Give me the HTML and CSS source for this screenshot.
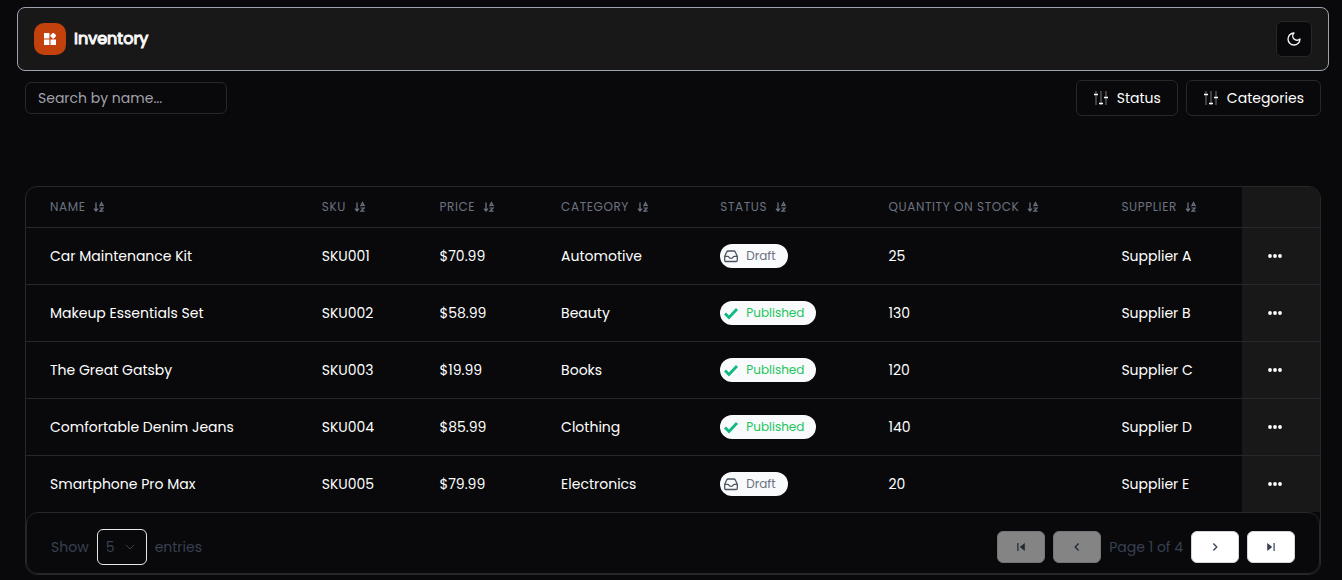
FILE: index.html
```
<!DOCTYPE html>
<html lang="en">
<head>
<meta charset="utf-8">
<meta name="viewport" content="width=device-width, initial-scale=1">
<title>Inventory</title>
<link rel="stylesheet" href="styles.css">
</head>
<body>
<svg class="sprite" aria-hidden="true">
  <symbol id="sort" viewBox="0 0 12 12"><path d="M3 1.500v8.500M1 7.600 3 9.900l2-2.300" fill="none" stroke="currentColor" stroke-width="1.300"/><path d="M6.500 5.300 8.500 1.500l2 3.800M7.200 4.400h2.600M6.500 7h3.600L7 10.200h3.600" fill="none" stroke="currentColor" stroke-width="1.200"/></symbol>
  <symbol id="sliders" viewBox="0 0 16 16"><path d="M3 1v14M8 1v14M13 1v14" stroke="currentColor" stroke-width="1" opacity=".45"/><path d="M1 4.500h4M6 13.500h4M11 7.500h4" stroke="currentColor" stroke-width="1.500"/></symbol>
  <symbol id="inbox" viewBox="0 0 16 16"><path d="M1.700 8.300 3.700 4Q4.200 3 5.200 3h5.600q1 0 1.500 1l2 4.300v3.900q0 1.300-1.300 1.300H3q-1.300 0-1.300-1.300zM1.700 8.300h3q.8 0 1.100.8.500 1.300 2.200 1.300t2.200-1.300q.3-.8 1.100-.8h3" fill="none" stroke="currentColor" stroke-width="1.300" stroke-linejoin="round"/></symbol>
  <symbol id="check" viewBox="0 0 16 16"><path d="m2 8.500 4 4L14 4" fill="none" stroke="currentColor" stroke-width="2.800"/></symbol>
  <symbol id="dots" viewBox="0 0 16 16"><g fill="currentColor"><circle cx="3" cy="8" r="1.900"/><circle cx="8" cy="8" r="1.900"/><circle cx="13" cy="8" r="1.900"/></g></symbol>
</svg>

<header class="topbar">
  <div class="brand">
    <span class="logo"><svg viewBox="0 0 12 12" width="12" height="12" fill="#fff" aria-hidden="true"><path d="M0 0h5.400v5.400H0zM0 6.500h5.400V12H0zM6.500 6.500H12V12H6.500z"/><path d="M9.200-.3 12.200 2.700l-3 3-3-3z" stroke="#fff" stroke-width=".6" stroke-linejoin="round"/></svg></span>
    <h1 class="title">Inventory</h1>
  </div>
  <button class="theme" type="button" aria-label="Toggle theme"><svg viewBox="0 0 24 24" width="16" height="16" fill="none" stroke="currentColor" stroke-width="2" stroke-linecap="round" stroke-linejoin="round"><path d="M12 3a6 6 0 0 0 9 9 9 9 0 1 1-9-9Z"/></svg></button>
</header>

<main class="content">
  <div class="toolbar">
    <input class="search" type="text" placeholder="Search by name..." aria-label="Search by name">
    <div class="filters">
      <button class="filter" type="button"><svg class="icon"><use href="#sliders"/></svg>Status</button>
      <button class="filter" type="button"><svg class="icon"><use href="#sliders"/></svg>Categories</button>
    </div>
  </div>

  <section class="panel">
    <table class="table">
      <colgroup><col class="c-name"><col class="c-sku"><col class="c-price"><col class="c-category"><col class="c-status"><col class="c-quantity"><col class="c-supplier"><col class="c-actions"></colgroup>
      <thead>
        <tr>
          <th><button class="sort" type="button">Name<svg class="sort-icon"><use href="#sort"/></svg></button></th>
          <th><button class="sort" type="button">SKU<svg class="sort-icon"><use href="#sort"/></svg></button></th>
          <th><button class="sort" type="button">Price<svg class="sort-icon"><use href="#sort"/></svg></button></th>
          <th><button class="sort" type="button">Category<svg class="sort-icon"><use href="#sort"/></svg></button></th>
          <th><button class="sort" type="button">Status<svg class="sort-icon"><use href="#sort"/></svg></button></th>
          <th><button class="sort" type="button">Quantity on stock<svg class="sort-icon"><use href="#sort"/></svg></button></th>
          <th><button class="sort" type="button">Supplier<svg class="sort-icon"><use href="#sort"/></svg></button></th>
          <th class="actions" aria-label="Actions"></th>
        </tr>
      </thead>
      <tbody>
        <tr><td>Car Maintenance Kit</td><td>SKU001</td><td>$70.99</td><td>Automotive</td><td><span class="badge draft"><svg class="badge-icon"><use href="#inbox"/></svg>Draft</span></td><td>25</td><td>Supplier A</td><td class="actions"><button class="more" type="button" aria-label="Row actions"><svg class="icon"><use href="#dots"/></svg></button></td></tr>
        <tr><td>Makeup Essentials Set</td><td>SKU002</td><td>$58.99</td><td>Beauty</td><td><span class="badge published"><svg class="badge-icon"><use href="#check"/></svg>Published</span></td><td>130</td><td>Supplier B</td><td class="actions"><button class="more" type="button" aria-label="Row actions"><svg class="icon"><use href="#dots"/></svg></button></td></tr>
        <tr><td>The Great Gatsby</td><td>SKU003</td><td>$19.99</td><td>Books</td><td><span class="badge published"><svg class="badge-icon"><use href="#check"/></svg>Published</span></td><td>120</td><td>Supplier C</td><td class="actions"><button class="more" type="button" aria-label="Row actions"><svg class="icon"><use href="#dots"/></svg></button></td></tr>
        <tr><td>Comfortable Denim Jeans</td><td>SKU004</td><td>$85.99</td><td>Clothing</td><td><span class="badge published"><svg class="badge-icon"><use href="#check"/></svg>Published</span></td><td>140</td><td>Supplier D</td><td class="actions"><button class="more" type="button" aria-label="Row actions"><svg class="icon"><use href="#dots"/></svg></button></td></tr>
        <tr><td>Smartphone Pro Max</td><td>SKU005</td><td>$79.99</td><td>Electronics</td><td><span class="badge draft"><svg class="badge-icon"><use href="#inbox"/></svg>Draft</span></td><td>20</td><td>Supplier E</td><td class="actions"><button class="more" type="button" aria-label="Row actions"><svg class="icon"><use href="#dots"/></svg></button></td></tr>
      </tbody>
    </table>

    <footer class="pager">
      <div class="group">
        <label for="size">Show</label>
        <span class="select-wrap">
          <select class="size" id="size"><option>5</option><option>10</option><option>20</option></select>
          <svg class="chevron" viewBox="0 0 10 6" width="10" height="6" fill="none" stroke="currentColor" aria-hidden="true"><path d="m.8.800 4.200 4.200L9.200.800"/></svg>
        </span>
        <span>entries</span>
      </div>
      <nav class="group" aria-label="Pagination">
        <button class="page" type="button" disabled aria-label="First page"><svg viewBox="0 0 10 10" width="10" height="10" fill="currentColor"><path d="M1.300 1h1.200v8H1.300zM8.800 1v8l-5-4z"/></svg></button>
        <button class="page" type="button" disabled aria-label="Previous page"><svg viewBox="0 0 10 10" width="10" height="10" fill="none" stroke="currentColor" stroke-width="1.300"><path d="M6.600 1.500 3.200 5l3.400 3.500"/></svg></button>
        <span>Page 1 of 4</span>
        <button class="page" type="button" aria-label="Next page"><svg viewBox="0 0 10 10" width="10" height="10" fill="none" stroke="currentColor" stroke-width="1.300"><path d="M3.400 1.500 6.800 5 3.400 8.500"/></svg></button>
        <button class="page" type="button" aria-label="Last page"><svg viewBox="0 0 10 10" width="10" height="10" fill="currentColor"><path d="M7.500 1h1.200v8H7.500zM1.200 1v8l5-4z"/></svg></button>
      </nav>
    </footer>
  </section>
</main>
</body>
</html>
```
FILE: styles.css
```
* { box-sizing: border-box; }
body {
  margin: 0;
  padding: 7px 13px 0 17px;
  background: #09090b;
  color: #fafafa;
  font-family: Poppins, Inter, "Liberation Sans", sans-serif;
  font-size: 14px;
  line-height: 20px;
}
button, input, select { font: inherit; color: inherit; }
button { cursor: pointer; }
svg { flex: none; display: block; }
.sprite { display: none; }
.icon { width: 16px; height: 16px; }

.topbar {
  display: flex;
  align-items: center;
  justify-content: space-between;
  height: 64px;
  padding: 0 16px;
  border: 1px solid #9ca3af;
  border-radius: 8px;
  background: #181818;
}
.brand { display: flex; align-items: center; gap: 8px; }
.logo {
  display: grid;
  place-items: center;
  width: 32px;
  height: 32px;
  border-radius: 10px;
  background: #c2410c;
}
.title {
  margin: 0;
  font-size: 16px;
  line-height: 24px;
  font-weight: 400;
  -webkit-text-stroke: 1px currentColor;
}
.theme {
  display: grid;
  place-items: center;
  width: 36px;
  height: 36px;
  padding: 0;
  border: 1px solid #27272a;
  border-radius: 6px;
  background: #09090b;
}

.content { padding: 9px 8px 0; }
.toolbar { display: flex; align-items: center; justify-content: space-between; }
.search {
  width: 202px;
  height: 32px;
  padding: 0 12px;
  border: 1px solid #27272a;
  border-radius: 6px;
  background: transparent;
}
.search::placeholder { color: #a1a1aa; opacity: 1; }
.filters { display: flex; gap: 8px; }
.filter {
  display: flex;
  align-items: center;
  gap: 8px;
  height: 36px;
  padding: 0 16px;
  border: 1px solid #27272a;
  border-radius: 6px;
  background: transparent;
  color: #fff;
}

.panel {
  margin-top: 70px;
  border: 1px solid #27272a;
  border-radius: 12px;
  overflow: hidden;
}
.table { width: 100%; border-collapse: separate; border-spacing: 0; table-layout: fixed; color: #fff; }
.c-name { width: 21%; }
.c-sku { width: 9.1%; }
.c-price { width: 9.4%; }
.c-category { width: 12.3%; }
.c-status { width: 13%; }
.c-quantity { width: 18%; }
.c-supplier { width: 11.2%; }
.c-actions { width: 6%; }
th, td { padding: 0 0 0 24px; text-align: left; white-space: nowrap; border-bottom: 1px solid #27272a; }
th { height: 41px; font-weight: 400; }
td { height: 57px; }
tbody tr:last-child td { height: 56px; border-bottom: 0; }
.sort {
  display: flex;
  align-items: center;
  gap: 8px;
  padding: 0;
  border: 0;
  background: none;
  color: #6b7280;
  font-size: 12px;
  line-height: 16px;
  letter-spacing: 0.05em;
  text-transform: uppercase;
}
.sort-icon { width: 12px; height: 12px; }
.actions { background: #181818; }
.more { display: block; padding: 0; border: 0; background: none; }
td.actions { padding-left: 25px; }
.badge {
  display: inline-flex;
  align-items: center;
  gap: 7px;
  height: 24px;
  padding: 0 12px 0 3px;
  border-radius: 12px;
  background: #f9fafb;
  font-size: 12px;
  vertical-align: middle;
}
.badge-icon { width: 16px; height: 16px; }
.draft { color: #6b7280; }
.draft .badge-icon { color: #4b5563; }
.published { color: #22c55e; }
.published .badge-icon { color: #10b981; }

.pager {
  display: flex;
  align-items: center;
  justify-content: space-between;
  padding: 16px 24px 8px;
  border: 1px solid #27272a;
  border-radius: 12px;
  color: #374151;
}
.group { display: flex; align-items: center; gap: 8px; }
.select-wrap { display: grid; align-items: center; }
.select-wrap > * { grid-area: 1 / 1; }
.size {
  appearance: none;
  width: 50px;
  height: 36px;
  padding: 0 8px;
  border: 1px solid #e5e7eb;
  border-radius: 6px;
  background: transparent;
}
.chevron { justify-self: end; margin-right: 12px; pointer-events: none; }
.page {
  display: grid;
  place-items: center;
  width: 48px;
  height: 32px;
  padding: 0;
  border: 1px solid #d1d5db;
  border-radius: 6px;
  background: #fff;
  color: #374151;
}
.page:disabled { border-color: #71757b; background: #848484; color: #1f2937; }
```
